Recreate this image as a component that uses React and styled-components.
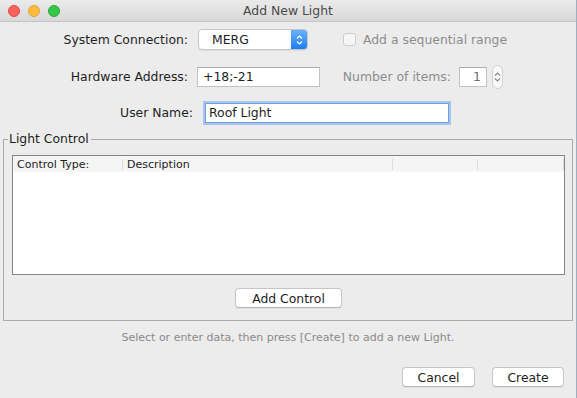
import React from "react";
import styled, { createGlobalStyle } from "styled-components";

const GlobalStyle = createGlobalStyle`
  html, body {
    margin: 0;
    padding: 0;
    background: #9fb0bd;
  }
  body {
    font-family: "DejaVu Sans", "Liberation Sans", sans-serif;
    font-size: 12.4px;
    line-height: 15px;
    color: #1e1e1e;
  }
`;

const Window = styled.div`
  width: 576px;
  height: 398px;
  background: #ececec;
  overflow: hidden;
  display: flex;
  flex-direction: column;
`;

const TitleBar = styled.div`
  height: 21px;
  border-bottom: 1px solid #c4c4c4;
  background: linear-gradient(#ebebeb, #d8d8d8);
  display: flex;
  align-items: center;
  position: relative;
`;

const Lights = styled.div`
  display: flex;
  gap: 8px;
  padding-left: 8px;
`;

const Light = styled.span`
  width: 12px;
  height: 12px;
  border-radius: 50%;
  box-sizing: border-box;
  background: ${(p) => p.$c};
  border: 1px solid ${(p) => p.$b};
`;

const Title = styled.div`
  position: absolute;
  left: 0;
  right: 0;
  text-align: center;
  color: #4a4a4a;
  font-size: 12.4px;
  pointer-events: none;
`;

const Form = styled.div`
  display: flex;
  flex-direction: column;
  padding-top: 7px;
`;

const Row = styled.div`
  display: flex;
  align-items: center;
  height: ${(p) => p.$h || 21}px;
  margin-bottom: ${(p) => p.$mb || 0}px;
`;

const Label = styled.span`
  width: ${(p) => p.$w}px;
  margin-right: ${(p) => p.$gap}px;
  margin-left: ${(p) => p.$ml || 0}px;
  text-align: right;
  color: ${(p) => (p.$dim ? "#8c8c8c" : "#1e1e1e")};
  white-space: nowrap;
`;

const Combo = styled.div`
  width: 110px;
  height: 21px;
  box-sizing: border-box;
  border: 1px solid #c6c6c6;
  border-radius: 4px;
  background: #fff;
  display: flex;
  align-items: center;
  overflow: hidden;
  box-shadow: 0 1px 1px rgba(0, 0, 0, 0.06);
`;

const ComboText = styled.span`
  flex: 1;
  padding-left: 13px;
`;

const ComboArrows = styled.span`
  width: 16px;
  height: 100%;
  background: linear-gradient(#69b1fb, #1f7ef4);
  display: flex;
  align-items: center;
  justify-content: center;
`;

const Check = styled.span`
  width: 13px;
  height: 13px;
  box-sizing: border-box;
  border: 1px solid #cdcdcd;
  border-radius: 3px;
  background: #f6f6f6;
  margin-left: ${(p) => p.$ml}px;
  margin-right: 7px;
`;

const Dim = styled.span`
  color: #8c8c8c;
  white-space: nowrap;
`;

const Field = styled.div`
  width: ${(p) => p.$w}px;
  height: 20px;
  box-sizing: border-box;
  background: #fff;
  border: 1px solid #c2c2c2;
  border-top-color: #acacac;
  display: flex;
  align-items: center;
  padding: 0 5px;
  justify-content: ${(p) => (p.$right ? "flex-end" : "flex-start")};
  color: ${(p) => (p.$dim ? "#6e6e6e" : "#1e1e1e")};
  white-space: nowrap;
`;

const FocusField = styled(Field)`
  border: 1px solid #6c9fdc;
  box-shadow: 0 0 0 2px #a6c6ee;
  margin-left: 2px;
  padding-left: 3px;
`;

const Stepper = styled.span`
  width: 11px;
  height: 24px;
  margin-left: 5px;
  box-sizing: border-box;
  border: 1px solid #cfcfcf;
  border-radius: 6px;
  background: #f7f7f7;
  display: flex;
  align-items: center;
  justify-content: center;
`;

const Group = styled.fieldset`
  margin: 8px 3px 0 3px;
  padding: 0 7px 12px 8px;
  border: 1px solid #ababab;
  display: flex;
  flex-direction: column;
  align-items: stretch;
`;

const Legend = styled.legend`
  margin-left: -4px;
  padding: 0 2px 0 1px;
  line-height: 16px;
  font-size: 12.4px;
  color: #1e1e1e;
`;

const Table = styled.div`
  margin-top: 8px;
  height: 118px;
  border: 1px solid #858585;
  background: #fff;
  display: flex;
  flex-direction: column;
`;

const HeaderRow = styled.div`
  height: 16px;
  background: #f5f5f5;
  display: grid;
  grid-template-columns: 110px 270px 85px 1fr;
  align-items: center;
  font-size: 11px;
  color: #222;
`;

const HeaderCell = styled.div`
  padding-left: 4px;
  height: 11px;
  line-height: 11px;
  border-right: 1px solid #dcdcdc;
  white-space: nowrap;
`;

const GroupFooter = styled.div`
  display: flex;
  justify-content: center;
  padding-top: 13px;
`;

const Button = styled.button`
  font-family: inherit;
  font-size: 12.4px;
  line-height: 15px;
  color: #1e1e1e;
  width: ${(p) => p.$w}px;
  height: 20px;
  padding: 0;
  background: #fff;
  border: 1px solid #c6c6c6;
  border-bottom-color: #b3b3b3;
  border-radius: 4px;
  box-shadow: 0 1px 0 rgba(0, 0, 0, 0.04);
  margin-left: ${(p) => p.$ml || 0}px;
`;

const Hint = styled.div`
  text-align: center;
  font-size: 11px;
  color: #8a8a8a;
  margin-top: 10px;
  height: 14px;
  line-height: 14px;
`;

const Actions = styled.div`
  display: flex;
  justify-content: flex-end;
  padding-right: 12px;
  margin-top: 22px;
`;

const UpDown = ({ color }) => (
  <svg width="7" height="12" viewBox="0 0 7 12">
    <path d="M1 4.5 L3.5 2 L6 4.5" fill="none" stroke={color} strokeWidth="1.2" />
    <path d="M1 7.5 L3.5 10 L6 7.5" fill="none" stroke={color} strokeWidth="1.2" />
  </svg>
);

export default function App() {
  return (
    <>
      <GlobalStyle />
      <Window>
        <TitleBar>
          <Lights>
            <Light $c="#fc605b" $b="#de4a45" />
            <Light $c="#fdbc40" $b="#dea236" />
            <Light $c="#34c84a" $b="#27aa35" />
          </Lights>
          <Title>Add New Light</Title>
        </TitleBar>

        <Form>
          <Row $mb={16}>
            <Label $w={188} $gap={10}>System Connection:</Label>
            <Combo>
              <ComboText>MERG</ComboText>
              <ComboArrows>
                <UpDown color="#fff" />
              </ComboArrows>
            </Combo>
            <Check $ml={35} />
            <Dim>Add a sequential range</Dim>
          </Row>

          <Row $mb={15}>
            <Label $w={188} $gap={9}>Hardware Address:</Label>
            <Field $w={123}>+18;-21</Field>
            <Label $w={109} $gap={8} $ml={22} $dim>Number of items:</Label>
            <Field $w={28} $right $dim>1</Field>
            <Stepper>
              <UpDown color="#8a8a8a" />
            </Stepper>
          </Row>

          <Row>
            <Label $w={193} $gap={10}>User Name:</Label>
            <FocusField $w={244}>Roof Light</FocusField>
          </Row>
        </Form>

        <Group>
          <Legend>Light Control</Legend>
          <Table>
            <HeaderRow>
              <HeaderCell>Control Type:</HeaderCell>
              <HeaderCell>Description</HeaderCell>
              <HeaderCell />
              <HeaderCell />
            </HeaderRow>
          </Table>
          <GroupFooter>
            <Button $w={107}>Add Control</Button>
          </GroupFooter>
        </Group>

        <Hint>Select or enter data, then press [Create] to add a new Light.</Hint>

        <Actions>
          <Button $w={73}>Cancel</Button>
          <Button $w={72} $ml={17}>Create</Button>
        </Actions>
      </Window>
    </>
  );
}
